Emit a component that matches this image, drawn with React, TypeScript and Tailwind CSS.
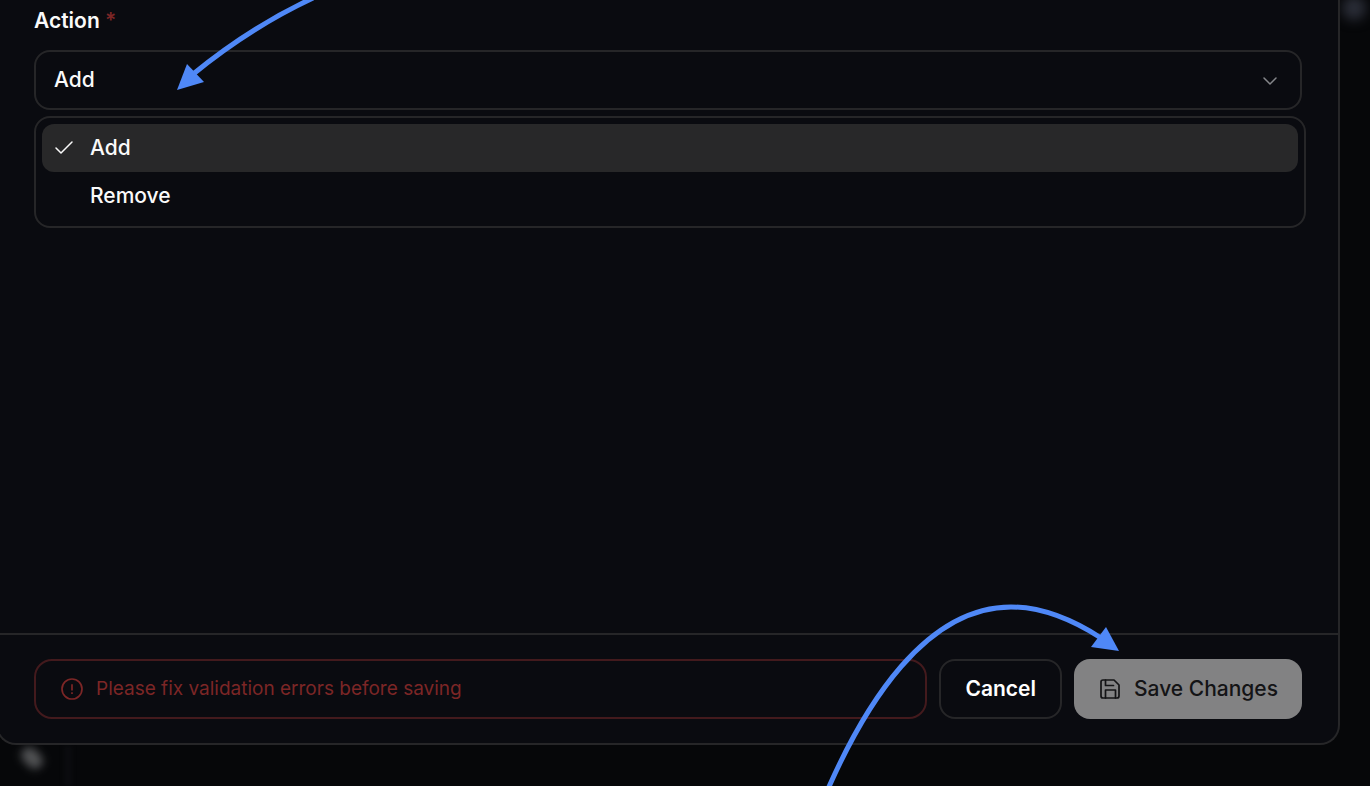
import { useState } from 'react';
import { Check, ChevronDown } from 'lucide-react';

const ACTIONS = ['Add', 'Remove'];

function SaveIcon() {
  return (
    <svg width="24" height="24" viewBox="0 0 24 24" fill="none" stroke="currentColor" strokeWidth="1.7" strokeLinecap="round" strokeLinejoin="round" className="shrink-0">
      <path d="M19 21H5a2 2 0 0 1-2-2V5a2 2 0 0 1 2-2h11l5 5v11a2 2 0 0 1-2 2Z" />
      <path d="M17.5 21v-8h-10v8" />
      <path d="M7.5 3v5.5h8" />
    </svg>
  );
}

function AlertIcon() {
  return (
    <svg width="24" height="24" viewBox="0 0 24 24" fill="none" stroke="currentColor" strokeWidth="1.7" className="shrink-0">
      <circle cx="12" cy="12" r="10" />
      <path d="M12 7.2v6.2M12 15.3v1.8" />
    </svg>
  );
}

function ActionField() {
  const [action, setAction] = useState('Add');

  return (
    <div>
      <label htmlFor="action" className="block text-[21px] leading-[30px] font-semibold text-neutral-50">
        Action <span className="text-[#7c2626]">*</span>
      </label>
      <div className="relative mt-3.5">
        <select
          id="action"
          value={action}
          onChange={(e) => setAction(e.target.value)}
          className="block h-[60px] w-full appearance-none rounded-2xl border-2 border-[#262628] bg-transparent px-[18px] text-[21px] font-medium text-neutral-50 outline-none"
        >
          {ACTIONS.map((item) => (
            <option key={item} value={item}>{item}</option>
          ))}
        </select>
        <ChevronDown size={24} strokeWidth={1.5} className="pointer-events-none absolute top-[19px] right-5 text-[#85868a]" />

        {/* Open menu */}
        <ul
          role="listbox"
          aria-label="Action"
          className="absolute top-full left-0 mt-1.5 w-[calc(100%+4px)] rounded-2xl border-2 border-[#262628] bg-[#0a0b10] p-1.5"
        >
          {ACTIONS.map((item) => (
            <li key={item} role="option" aria-selected={item === action}>
              <button
                type="button"
                onClick={() => setAction(item)}
                className={`flex h-12 w-full items-center gap-4 rounded-xl px-2.5 text-left text-[21px] font-medium text-neutral-50 ${item === action ? 'bg-[#282829]' : ''}`}
              >
                <span className="w-[22px]">
                  {item === action && <Check size={24} strokeWidth={1.5} />}
                </span>
                {item}
              </button>
            </li>
          ))}
        </ul>
      </div>
    </div>
  );
}

function Arrows() {
  return (
    <>
      <svg width="320" height="100" viewBox="0 0 320 100" className="pointer-events-none absolute top-0 left-0" fill="none">
        <path d="M313 -2Q249 28 192 75" stroke="#4f88f7" strokeWidth="5" />
        <path d="M177 90L187 64L204 82Z" fill="#4f88f7" />
      </svg>
      <svg width="310" height="196" viewBox="820 590 310 196" className="pointer-events-none absolute right-[240px] bottom-0" fill="none">
        <path d="M828 789C865 705 925 607 1011 607C1040 607 1070 618 1101 638" stroke="#4f88f7" strokeWidth="5" />
        <path d="M1119 651L1106 627L1091 647Z" fill="#4f88f7" />
      </svg>
    </>
  );
}

export default function App() {
  return (
    <div className="relative flex min-h-screen flex-col overflow-hidden bg-[#060709] pr-[30px] pb-[41px] font-['Inter',sans-serif]">
      {/* Blurred page behind the dialog */}
      <div className="absolute -top-1 right-1 h-6 w-6 rounded-full bg-[#2a2d37] blur-[6px]" />
      <div className="absolute bottom-5 left-5 h-4 w-6 rotate-45 rounded-full bg-[#505153] blur-[4px]" />
      <div className="absolute bottom-0 left-16 h-10 w-2 bg-[#0b0c0f] blur-[2px]" />

      <div role="dialog" aria-label="Action" className="relative -ml-1 flex flex-1 flex-col rounded-b-[20px] border-2 border-t-0 border-[#262628] bg-[#0a0b10]">
        <div className="flex-1 px-9 pt-1.5">
          <ActionField />
        </div>

        <div className="flex gap-3 border-t-2 border-[#262628] px-9 py-6">
          <div role="alert" className="flex h-[60px] flex-1 items-center gap-3 rounded-[18px] border-2 border-[#431a1d] px-6 text-[19px] text-[#7c2626]">
            <AlertIcon />
            Please fix validation errors before saving
          </div>
          <button type="button" className="h-[60px] rounded-2xl border-2 border-[#262628] px-6 text-[21px] font-semibold text-white">
            Cancel
          </button>
          <button type="button" disabled className="flex h-[60px] items-center gap-3 rounded-2xl bg-[#828283] px-6 text-[21px] font-medium text-[#141416]">
            <SaveIcon />
            Save Changes
          </button>
        </div>
      </div>

      <Arrows />
    </div>
  );
}
